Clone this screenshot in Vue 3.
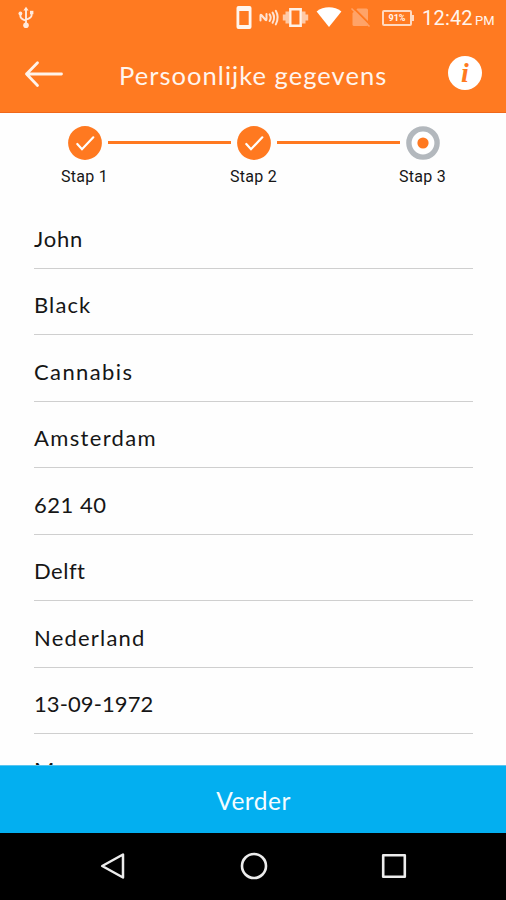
<script setup>
const steps = [
  { label: 'Stap 1', done: true },
  { label: 'Stap 2', done: true },
  { label: 'Stap 3', done: false },
]
const fields = [
  { value: 'John', name: 'first' },
  { value: 'Black', name: 'last' },
  { value: 'Cannabis', name: 'street' },
  { value: 'Amsterdam', name: 'city' },
  { value: '621 40', name: 'postal' },
  { value: 'Delft', name: 'region' },
  { value: 'Nederland', name: 'country' },
  { value: '13-09-1972', name: 'birth' },
  { value: 'M', name: 'gender' },
]
</script>

<template>
  <div class="screen">
    <header class="header">
      <div class="status">
        <svg class="usb" width="16" height="24" viewBox="0 0 16 24" fill="none" stroke="#ffe9dc" stroke-width="1.9">
          <path d="M8 3v17M2.400 7v3.200q0 2.600 5.600 4.400M13.600 6v3.200q0 2.600-5.600 4.400" />
          <path d="M8 .8 10.600 4.600H5.400Z" fill="#ffe9dc" stroke="none" />
          <circle cx="8" cy="19.200" r="2.800" fill="#ffe9dc" stroke="none" />
          <circle cx="2.400" cy="7.500" r="1.900" fill="#ffe9dc" stroke="none" />
          <path d="M12 4.800h3.400v3.400H12Z" fill="#ffe9dc" stroke="none" />
        </svg>
        <svg class="indicators" width="146" height="30" viewBox="232 3 146 30" fill="none">
          <path fill="#fff5ee" fill-rule="evenodd" d="M238.500 6h11q2 0 2 2v19q0 2-2 2h-11q-2 0-2-2V8q0-2 2-2Zm.8 5v14h9.400V11Z" />
          <g stroke="#ffe3d2" stroke-width="2" stroke-linecap="round">
            <path d="M260.500 20.500V15.500q0-1.500 1.300 0l3.400 4q1.300 1.500 1.300-.2V14" />
            <path d="M269.600 14.400q2.200 3.200 0 6.600M272.600 12.600q3 4.800 0 10.200M275.800 10.800q3.700 6.400 0 13.600" />
          </g>
          <path stroke="#fff1e7" stroke-width="2.400" d="M290.300 9.200h10.400v16.600h-10.400Z" />
          <path fill="#ffc9a6" d="M285.500 11.500h3.500v12h-3.500ZM302 11.500h3.500v12H302ZM282.800 14.500h2.700v6h-2.700ZM305.500 14.500h2.700v6h-2.700Z" />
          <path fill="#fff" d="M316.600 11.500Q322 7.300 329 7.300T341.400 11.500L329 27Z" />
          <path fill="#ffa368" d="M357.500 8.500H366.500q1.500 0 1.500 1.500V24.500q0 1.500-1.500 1.500H354q-1.500 0-1.500-1.500V13Z" />
          <path stroke="#ff7a21" stroke-width="2" d="M352.500 7 371 25.500" />
          <path stroke="#ffa368" stroke-width="1.600" d="M351.500 8.500 369.500 26.500" />
        </svg>
        <span class="battery">91%</span>
        <span class="clock">12:42</span><span class="meridiem">PM</span>
      </div>
      <div class="bar">
        <svg class="back" width="42" height="32" viewBox="0 0 42 32" fill="none" stroke="#fff3ea" stroke-width="2.800" stroke-linecap="round" stroke-linejoin="round">
          <path d="M38.500 16H3.500M14.500 4.800 3.500 16l11 11.500" />
        </svg>
        <h1 class="title">Persoonlijke gegevens</h1>
        <button class="info" aria-label="Info">i</button>
      </div>
    </header>

    <ol class="steps">
      <template v-for="(step, i) in steps" :key="step.label">
        <li v-if="i" class="track"></li>
        <li class="step">
          <svg width="34" height="34" viewBox="0 0 34 34">
            <template v-if="step.done">
              <circle cx="17" cy="17" r="16.900" fill="#ff7920" />
              <path d="m9.300 18 4.700 5.200L25.300 11.300" fill="none" stroke="#fff" stroke-width="2.200" stroke-linecap="round" />
            </template>
            <template v-else>
              <circle cx="17" cy="17" r="14.100" fill="#fff" stroke="#b3b8bd" stroke-width="5.400" />
              <circle cx="17" cy="17" r="5.600" fill="#ff7920" />
            </template>
          </svg>
          <span class="label">{{ step.label }}</span>
        </li>
      </template>
    </ol>

    <main class="form">
      <div v-for="field in fields" :key="field.name" class="field">
        <span class="value" :class="field.name">{{ field.value }}</span>
      </div>
    </main>

    <button class="next">Verder</button>

    <nav class="nav">
      <svg width="30" height="30" viewBox="0 0 30 30" fill="none" stroke="#ececec" stroke-width="2.500" stroke-linejoin="round">
        <path d="M25 3.500v23L4.200 15Z" />
      </svg>
      <svg width="30" height="30" viewBox="0 0 30 30" fill="none" stroke="#ececec" stroke-width="2.600">
        <circle cx="15" cy="15" r="12" />
      </svg>
      <svg width="30" height="30" viewBox="0 0 30 30" fill="none" stroke="#ececec" stroke-width="2.600" stroke-linejoin="round">
        <path d="M4.200 4.200h21.600v21.600H4.200Z" />
      </svg>
    </nav>
  </div>
</template>

<style>
body {
  margin: 0;
  overflow: hidden;
}
</style>

<style scoped>
.screen {
  display: flex;
  flex-direction: column;
  width: 506px;
  height: 900px;
  overflow: hidden;
  background: #fefefe;
  color: #161616;
  font-family: Lato, sans-serif;
}
.header {
  flex: none;
  height: 113px;
  box-sizing: border-box;
  border-bottom: 1px solid #f0681a;
  background: #ff7a21;
  color: #fff5ee;
}
.status {
  display: flex;
  align-items: center;
  height: 36px;
  font-family: Roboto, sans-serif;
}
.usb {
  margin-left: 18px;
}
.indicators {
  margin-left: 198px;
}
.battery {
  position: relative;
  box-sizing: border-box;
  width: 30px;
  height: 16px;
  margin-left: 4px;
  border: 2px solid #ffd9c0;
  border-radius: 2px;
  font-size: 9px;
  font-weight: 700;
  line-height: 12px;
  text-align: center;
}
.battery::after {
  content: '';
  position: absolute;
  top: 3px;
  right: -4px;
  width: 2px;
  height: 6px;
  background: #ffd9c0;
}
.clock {
  width: 50px;
  margin-left: 10px;
  font-size: 20px;
  line-height: 36px;
  letter-spacing: 0.2px;
}
.meridiem {
  margin-left: 3px;
  padding-top: 4px;
  font-size: 13px;
}
.bar {
  display: flex;
  align-items: center;
  height: 76px;
}
.back {
  margin-left: 23px;
}
.title {
  width: 270px;
  margin: 1px 0 0 54px;
  font-size: 25.500px;
  font-weight: 400;
  line-height: 34px;
  letter-spacing: 1.050px;
  white-space: nowrap;
}
.info {
  width: 34px;
  height: 34px;
  margin-left: 59px;
  margin-top: -3px;
  padding: 0;
  border: 0;
  border-radius: 50%;
  background: #fff;
  color: #ff7a21;
  font: italic 700 28px/32px 'Liberation Serif', serif;
}
.steps {
  display: flex;
  flex: none;
  align-items: flex-start;
  justify-content: center;
  height: 80px;
  margin: 0;
  padding: 13px 0 0 1px;
  box-sizing: border-box;
  list-style: none;
}
.step {
  display: flex;
  flex-direction: column;
  align-items: center;
  width: 34px;
}
.label {
  margin-top: 7px;
  font-family: Roboto, sans-serif;
  font-size: 16px;
  line-height: 20px;
  letter-spacing: 0.300px;
  white-space: nowrap;
}
.track {
  width: 123px;
  height: 3px;
  margin: 15px 6px 0;
  background: #ff7920;
}
.form {
  flex: 1;
  min-height: 0;
  overflow: hidden;
  padding: 9px 33px 0 34px;
}
.field {
  display: flex;
  align-items: flex-end;
  box-sizing: border-box;
  height: 66.560px;
  padding-bottom: 15px;
  border-bottom: 1px solid #cfcfcf;
}
.value {
  font-size: 22px;
  line-height: 28px;
  letter-spacing: 0.800px;
  white-space: nowrap;
}
.last {
  letter-spacing: 1.100px;
}
.street {
  letter-spacing: 1.400px;
}
.city {
  letter-spacing: 1.350px;
}
.postal {
  letter-spacing: 0.500px;
}
.region {
  letter-spacing: 0.500px;
}
.country {
  letter-spacing: 1.200px;
}
.birth {
  letter-spacing: 0.100px;
}
.gender {
  margin-bottom: 1px;
}
.next {
  flex: none;
  height: 68px;
  padding: 2px 0 0 1px;
  border: 0;
  border-top: 1px solid #58c5f0;
  background: #03aff0;
  color: #f4fcff;
  font: 400 24.500px/30px Lato, sans-serif;
  letter-spacing: 0.500px;
}
.nav {
  display: flex;
  flex: none;
  justify-content: center;
  gap: 110.500px;
  height: 67px;
  padding: 18px 0 0 1px;
  box-sizing: border-box;
  background: #000;
}
</style>
